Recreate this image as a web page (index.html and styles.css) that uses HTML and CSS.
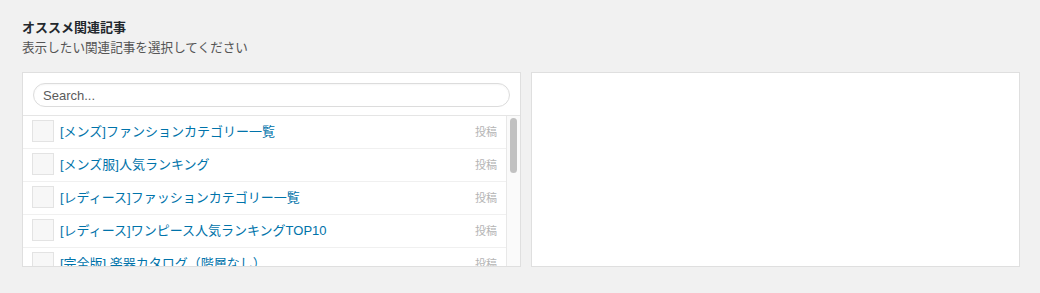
FILE: index.html
```html
<!DOCTYPE html>
<html lang="ja">
<head>
<meta charset="utf-8">
<title>オススメ関連記事</title>
<link rel="stylesheet" href="styles.css">
</head>
<body>
<div class="field">
  <div class="label">
    <h3 class="title">オススメ関連記事</h3>
    <p class="desc">表示したい関連記事を選択してください</p>
  </div>
  <div class="relation">
    <div class="choices">
      <div class="search-bar">
        <input class="search" type="text" placeholder="Search...">
      </div>
      <div class="list">
        <ul class="rows">
          <li class="row"><span class="check"></span><span class="name">[メンズ]ファンションカテゴリー一覧</span><span class="type">投稿</span></li>
          <li class="row"><span class="check"></span><span class="name">[メンズ服]人気ランキング</span><span class="type">投稿</span></li>
          <li class="row"><span class="check"></span><span class="name">[レディース]ファッションカテゴリー一覧</span><span class="type">投稿</span></li>
          <li class="row"><span class="check"></span><span class="name">[レディース]ワンピース人気ランキングTOP10</span><span class="type">投稿</span></li>
          <li class="row"><span class="check"></span><span class="name">[完全版] 楽器カタログ（階層なし）</span><span class="type">投稿</span></li>
        </ul>
        <div class="scrollbar"><div class="thumb"></div></div>
      </div>
    </div>
    <div class="values"></div>
  </div>
</div>
</body>
</html>
```

FILE: styles.css
```css
html, body {
  margin: 0;
  padding: 0;
  background: #f1f1f1;
}
body {
  font-family: "Liberation Sans", "Noto Sans CJK JP", sans-serif;
  color: #23282d;
}
.field {
  padding: 18px 20px 0 22px;
}
.title {
  margin: 0;
  font-size: 13px;
  font-weight: bold;
  line-height: 20px;
  color: #23282d;
}
.desc {
  margin: 0;
  font-size: 12.6px;
  line-height: 20px;
  color: #555;
}
.relation {
  margin-top: 14px;
  display: grid;
  grid-template-columns: 499px 1fr;
  column-gap: 10px;
}
.choices {
  background: #fff;
  border: 1px solid #dfdfdf;
  height: 193px;
  display: flex;
  flex-direction: column;
}
.values {
  background: #fff;
  border: 1px solid #dfdfdf;
  height: 193px;
}
.search-bar {
  padding: 10px 10px 8px 10px;
  border-bottom: 1px solid #e5e5e5;
}
.search {
  display: block;
  box-sizing: border-box;
  width: 100%;
  height: 24px;
  margin: 0;
  border: 1px solid #dcdcdc;
  border-radius: 12px;
  padding: 0 9px;
  font-family: "Liberation Sans", "Noto Sans CJK JP", sans-serif;
  font-size: 13px;
  color: #555;
  background: #fff;
  box-shadow: inset 0 1px 2px rgba(0,0,0,0.04);
  outline: none;
}
.search::placeholder {
  color: #5b5b5b;
}
.list {
  flex: 1;
  min-height: 0;
  display: flex;
}
.rows {
  list-style: none;
  margin: 0;
  padding: 0;
  flex: 1;
  min-width: 0;
  overflow: hidden;
}
.scrollbar {
  flex: none;
  width: 14px;
  background: #fafafa;
  border-left: 1px solid #e8e8e8;
  padding: 2px 3px 0 3px;
  box-sizing: border-box;
}
.thumb {
  height: 55px;
  border-radius: 4px;
  background: #c1c1c1;
}
.row {
  display: flex;
  align-items: center;
  height: 32px;
  border-bottom: 1px solid #f0f0f0;
  padding: 0 9px 0 9px;
}
.check {
  flex: none;
  width: 20px;
  height: 20px;
  margin-top: -2px;
  border: 1px solid #e3e3e3;
  background: #f7f7f7;
}
.name {
  flex: 1;
  margin-left: 6px;
  margin-top: -1px;
  font-size: 13px;
  line-height: 16px;
  color: #0073aa;
  white-space: nowrap;
}
.type {
  flex: none;
  font-size: 11px;
  line-height: 14px;
  margin-top: -1px;
  color: #b4b4b4;
}
```
